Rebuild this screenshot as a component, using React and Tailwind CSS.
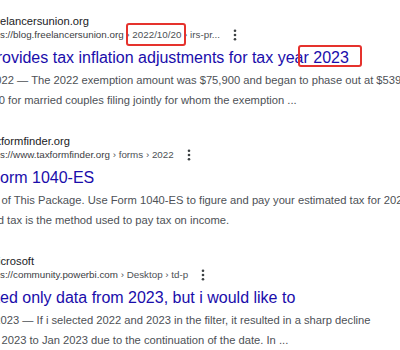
const dots = (
  <svg
    width="4"
    height="12"
    viewBox="0 0 4 12"
    className="ml-[13px] inline-block align-middle"
    aria-hidden="true"
  >
    <circle cx="2" cy="1.8" r="1.3" fill="#3c4043" />
    <circle cx="2" cy="6" r="1.3" fill="#3c4043" />
    <circle cx="2" cy="10.2" r="1.3" fill="#3c4043" />
  </svg>
);

// line cut off at the left edge: the hidden part ends at the padding edge
function Line({ hidden, className, children }) {
  return (
    <div className={`flex whitespace-pre ${className}`}>
      <span className="flex w-0 shrink-0 justify-end">{hidden}</span>
      <span className="shrink-0">{children}</span>
    </div>
  );
}

function Marked({ children, box }) {
  return (
    <span className="relative inline-block">
      {children}
      <span
        className={`pointer-events-none absolute rounded-[3px] border-2 border-[#e5322d] ${box}`}
      />
    </span>
  );
}

function Result({ site, url, title, snippet }) {
  return (
    <article className="flex h-[120px] flex-col pt-[15px]">
      <Line
        hidden={site.hidden}
        className={`text-[11.2px] leading-[13px] text-[#202124] ${site.pl}`}
      >
        {site.text}
      </Line>
      <Line
        hidden={url.hidden}
        className={`text-[9.8px] leading-[13px] text-[#4d5156] ${url.pl}`}
      >
        {url.text}
        {dots}
      </Line>
      <Line
        hidden={title.hidden}
        className={`mt-[6px] text-[16px] leading-[22px] text-[#1a0dab] ${title.pl}`}
      >
        {title.text}
      </Line>
      <div className="mt-[2px] text-[11.2px] leading-[19.5px] text-[#4d5156]">
        {snippet.map((s, i) => (
          <Line key={i} hidden={s.hidden} className={s.pl}>
            {s.text}
          </Line>
        ))}
      </div>
    </article>
  );
}

export default function App() {
  return (
    <main className="h-[350px] w-[400px] overflow-hidden bg-white font-['Liberation_Sans',Arial,sans-serif]">
      <Result
        site={{ hidden: "fr", text: "elancersunion.org", pl: "pl-0" }}
        url={{
          hidden: "http",
          pl: "pl-0",
          text: (
            <>
              <span className="text-[#3c4043]">s://blog.freelancersunion.org</span>
              {" › "}
              <Marked box="-left-[6px] -right-[5px] -top-[5px] -bottom-[5px]">
                2022/10/20
              </Marked>
              {" › irs-pr..."}
            </>
          ),
        }}
        title={{
          hidden: "IRS pr",
          pl: "pl-[2px]",
          text: (
            <>
              {"ovides tax inflation adjustments for tax year "}
              <Marked box="-left-[15px] -right-[13px] -top-[2px] bottom-[2px]">
                2023
              </Marked>
            </>
          ),
        }}
        snippet={[
          {
            hidden: "Oct 20, 20",
            pl: "pl-[1.5px]",
            text: "22 — The 2022 exemption amount was $75,900 and began to phase out at $539,900",
          },
          {
            hidden: "($1,079,800",
            pl: "pl-[5px]",
            text: " for married couples filing jointly for whom the exemption ...",
          },
        ]}
      />
      <Result
        site={{ hidden: "tax", text: "formfinder.org", pl: "pl-[1px]" }}
        url={{
          hidden: "http",
          pl: "pl-0",
          text: (
            <>
              <span className="text-[#3c4043]">s://www.taxformfinder.org</span>
              {" › forms › 2022"}
            </>
          ),
        }}
        title={{ hidden: "2022 F", pl: "pl-0", text: "orm 1040-ES" }}
        snippet={[
          {
            hidden: "Purpose ",
            pl: "pl-[1.5px]",
            text: "of This Package. Use Form 1040-ES to figure and pay your estimated tax for 2022.",
          },
          {
            hidden: "Estimated",
            pl: "pl-[4px]",
            text: " tax is the method used to pay tax on income.",
          },
        ]}
      />
      <Result
        site={{ hidden: "Mi", text: "crosoft", pl: "pl-[0.5px]" }}
        url={{
          hidden: "http",
          pl: "pl-0",
          text: (
            <>
              <span className="text-[#3c4043]">s://community.powerbi.com</span>
              {" › Desktop › td-p"}
            </>
          ),
        }}
        title={{
          hidden: "I select",
          pl: "pl-0",
          text: "ed only data from 2023, but i would like to",
        }}
        snippet={[
          {
            hidden: "Jan 5, 2",
            pl: "pl-[0.5px]",
            text: "023 — If i selected 2022 and 2023 in the filter, it resulted in a sharp decline",
          },
          {
            hidden: "from Dec ",
            pl: "pl-[1.5px]",
            text: "2023 to Jan 2023 due to the continuation of the date. In ...",
          },
        ]}
      />
    </main>
  );
}
